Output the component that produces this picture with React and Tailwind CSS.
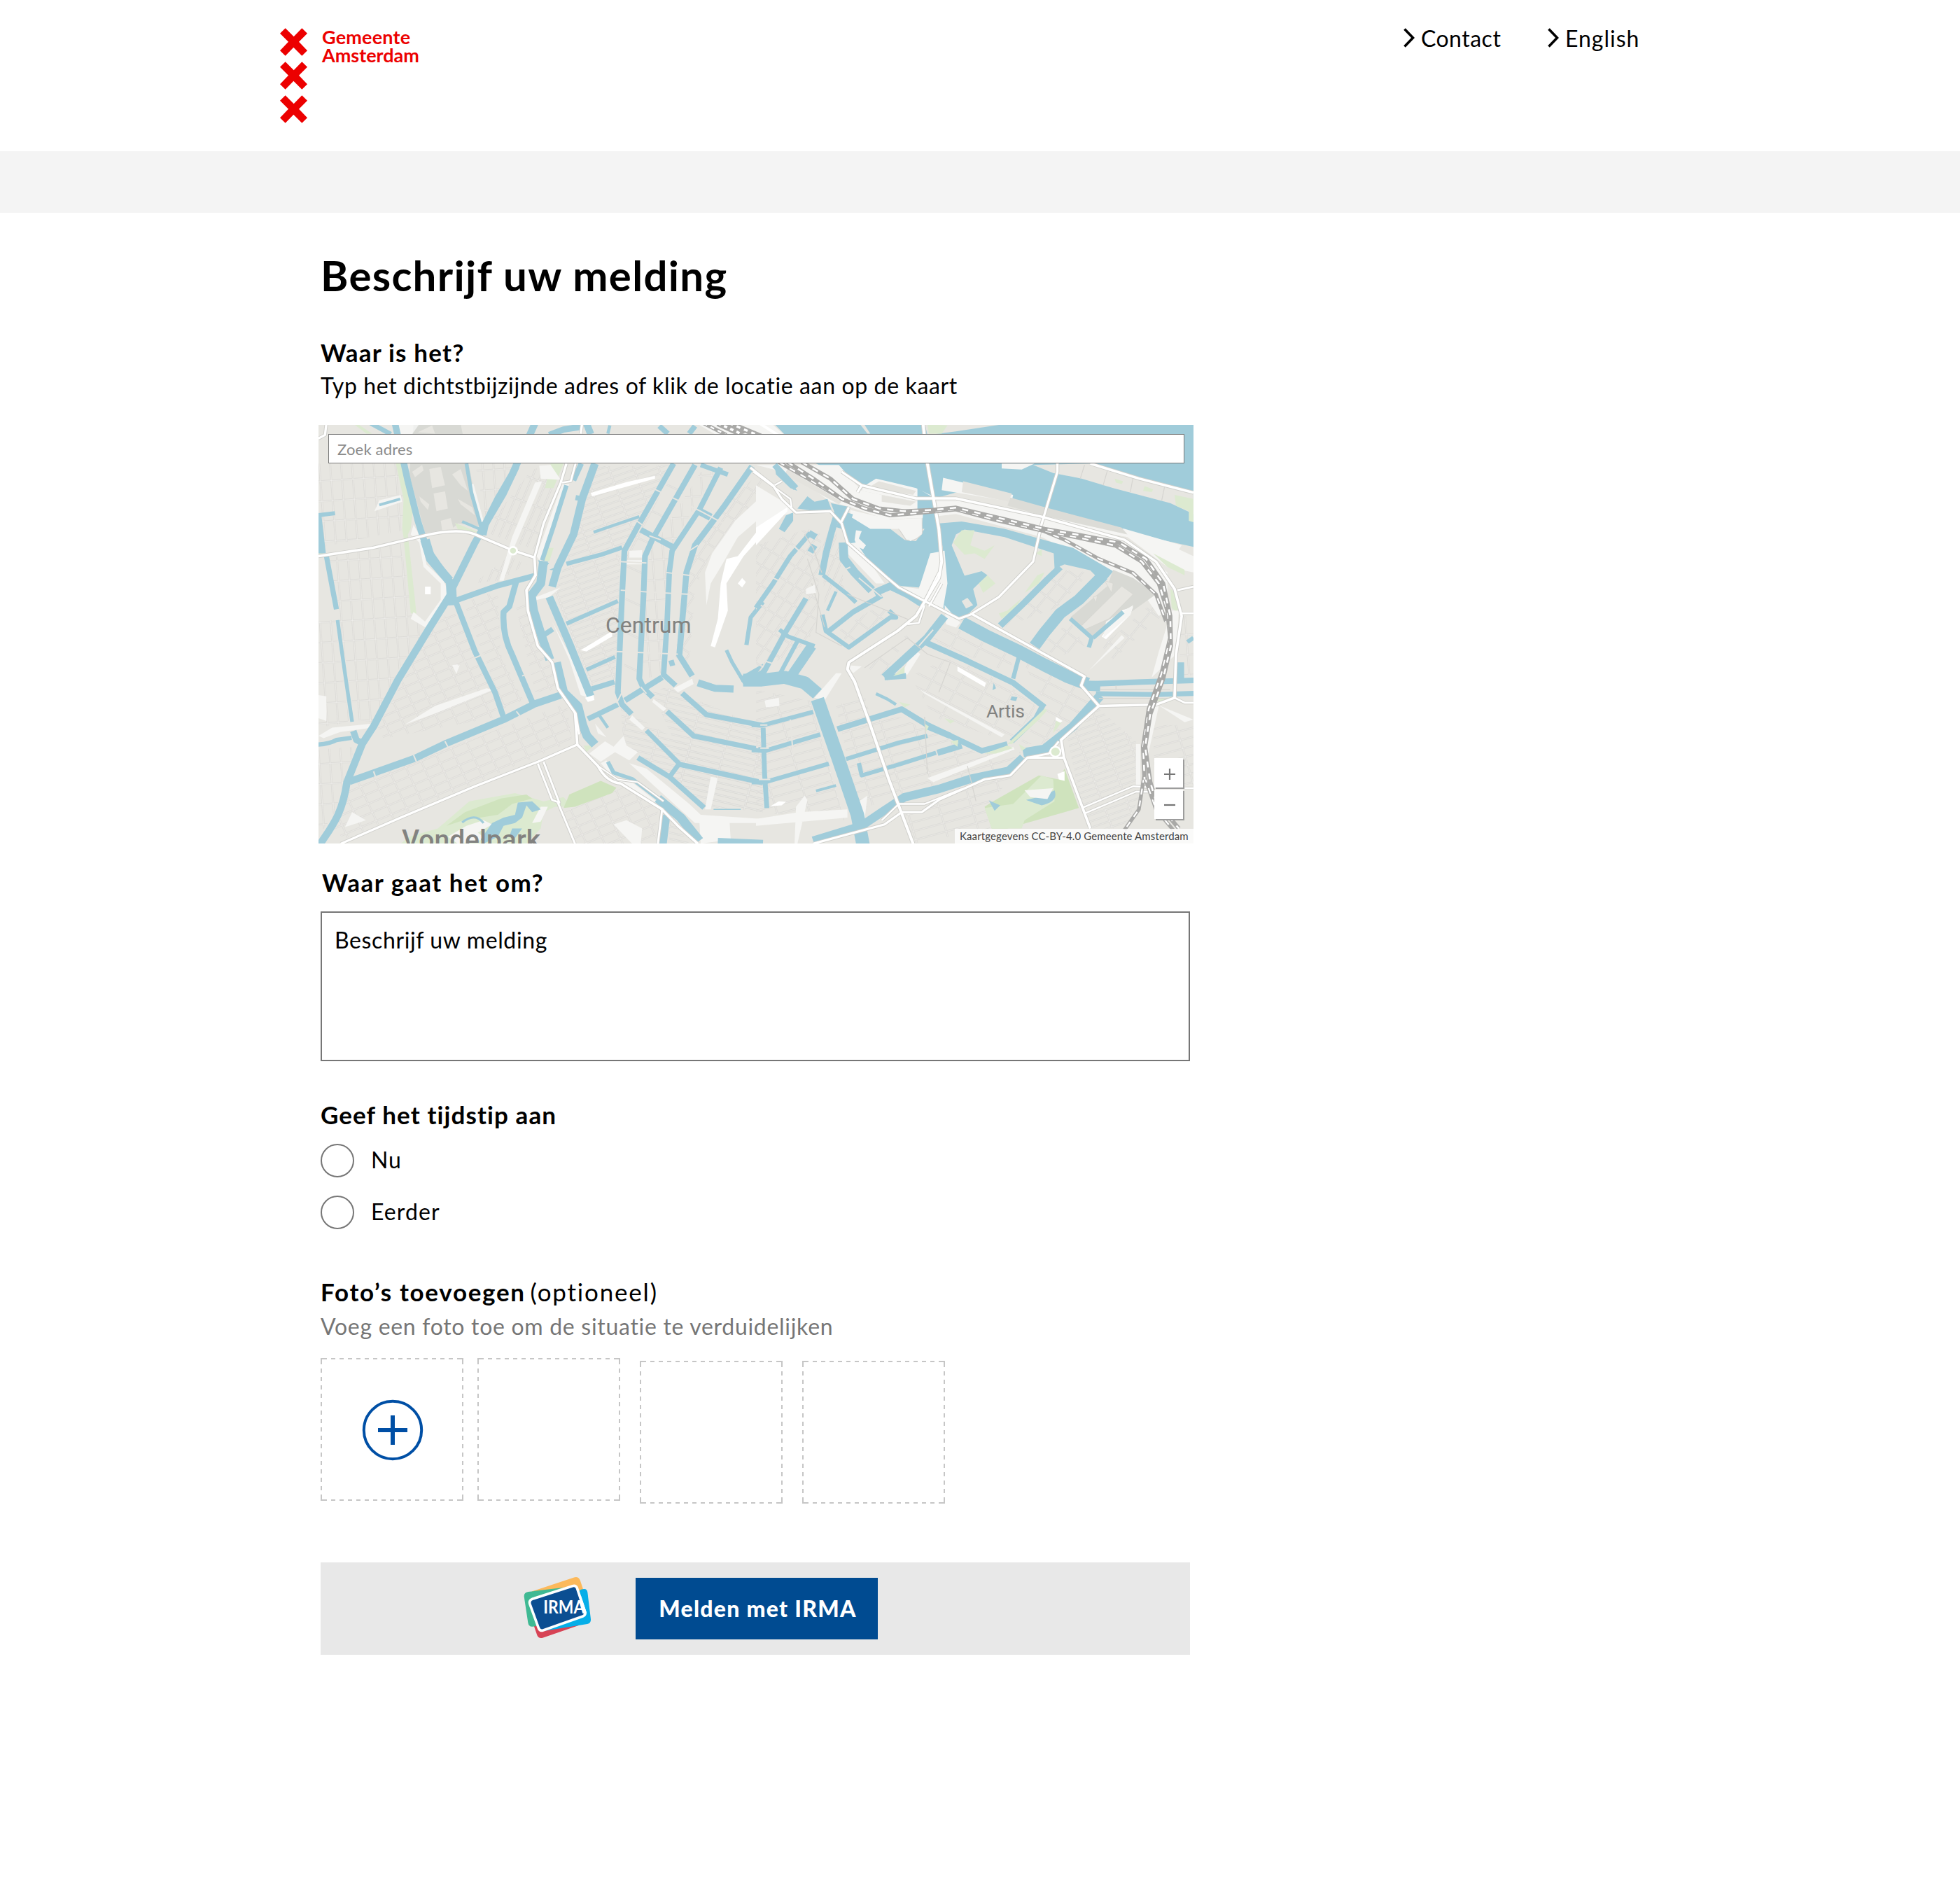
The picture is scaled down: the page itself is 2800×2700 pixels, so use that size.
const WATER = "#a0ccda";
const LAND = "#e7e6e1";
const STREET = "#d6d5d1";
const PALE = "#f5f5f3";
const PARK = "#dcead0";
const PARK_DARK = "#cfe3bd";

// [path, width] pairs of the canals in the western half of the map
const canalsWest = [
  ["M10 350 70 342", 14],
  ["M40 500 75 695", 17],
  ["M79 735 Q100 900 130 1108", 12],
  ["M134 1142 145 1175 172 1190", 22],
  ["M8 1192 Q50 1190 75 1175 L128 1167", 15],
  ["M15 1562 C60 1490 95 1450 112 1330 L165 1190 205 1125 290 955 400 765 475 640", 25],
  ["M475 630 560 450 590 395 640 290 690 200 770 12", 24],
  ["M590 395 660 270 705 170", 22],
  ["M280 12 325 225 360 370 390 470 430 530 478 600", 22],
  ["M385 440 405 510 470 590", 32],
  ["M475 585 480 680", 34],
  ["M490 660 560 850 630 1000 660 1092", 19],
  ["M495 662 640 608 770 572", 20],
  ["M705 590 680 685 660 705 Q655 790 690 862 L762 1040", 20],
  ["M120 1328 350 1242 460 1187 660 1100 770 1042 860 1010", 25],
  ["M800 518 790 600 757 645 765 700 792 790 822 880", 30],
  ["M845 890 870 1000 920 1050 937 1120 952 1160 980 1192", 30],
  ["M800 790 832 768", 18],
  ["M880 240 835 390 795 515", 15],
  ["M932 160 905 222", 18],
  ["M980 160 935 290 905 420 850 540 830 612", 26],
  ["M912 285 940 290", 18],
  ["M820 650 890 820 965 1015", 26],
  ["M530 160 548 270 582 395", 12],
  ["M515 373 580 402", 9],
  ["M195 12 265 52", 16],
  ["M820 55 870 35 930 25", 22],
  ["M950 12 965 52", 24],
  ["M1032 20 1025 50", 10],
  ["M1255 160 1130 390 1083 480 1075 640 1060 1000 1075 1045 1108 1080", 19],
  ["M1160 1140 1275 1262 1245 1305", 16],
  ["M1278 1265 1568 1332", 18],
  ["M1330 165 1180 440 1155 500 1150 640 1135 950 1150 985 1182 1018", 19],
  ["M1232 1070 1325 1160 1568 1212", 18],
  ["M1420 175 1345 330 1250 480 1240 560 1232 750 1220 935 1262 975", 18],
  ["M1285 1003 1370 1082 1568 1122", 18],
  ["M1350 165 1445 200", 16],
  ["M1530 170 1430 320 1330 460 1300 560 1275 865 1320 940", 20],
  ["M1340 965 1400 985 1465 988", 25],
  ["M1140 403 1250 465", 20],
  ["M1345 335 1385 357", 26],
  ["M975 412 1050 385 1135 355", 10],
  ["M880 528 1000 495 1075 468", 15],
  ["M880 748 1060 665", 14],
  ["M950 917 1050 870", 13],
  ["M968 988 1048 962", 18],
  ["M1085 1030 1215 945", 20],
  ["M955 1098 1060 1045", 18],
  ["M992 1080 1025 1130", 10],
  ["M1240 895 1258 890", 20],
  ["M1130 1240 1240 1310 1362 1424", 18],
  ["M1025 1255 1045 1295 1110 1318 1200 1390", 13],
  ["M1200 1390 1280 1460 1345 1545", 32],
  ["M1228 1450 1215 1562", 30],
  ["M1410 1545 1568 1552", 20],
  ["M1395 1430 1490 1430", 3],
  ["M1568 668 1525 725 1510 826", 14],
  ["M1440 845 1460 890 1500 960", 12],
  ["M1205 22 1235 50 M1330 22 1310 50", 18],
  ["M225 312 298 290", 9],
];

// canals in the eastern half
const canalsEast = [
  ["M215 1025 290 1250 355 1450 375 1562", 46],
  ["M-45 955 20 955 100 945 170 965 215 1005", 46],
  ["M120 945 195 830", 34],
  ["M205 830 112 795 82 770", 14],
  ["M190 415 120 500 60 600 0 690", 16],
  ["M185 415 210 430 M205 460 190 485", 22],
  ["M175 655 100 785 20 940", 18],
  ["M145 812 85 930", 14],
  ["M285 340 265 410 245 490 230 570", 22],
  ["M320 340 300 400", 40],
  ["M305 450 308 510 345 560 405 625", 30],
  ["M235 570 320 640 350 670", 14],
  ["M280 630 250 700", 10],
  ["M232 715 245 775 325 835 470 725 490 725 465 700", 15],
  ["M255 775 340 705 440 645", 18],
  ["M415 635 470 610 530 640 590 680", 26],
  ["M660 720 600 800 450 945", 28],
  ["M450 945 525 940", 20],
  ["M590 815 740 885 900 965 1010 1055", 20],
  ["M1005 1045 980 1095 895 1180", 18],
  ["M920 870 900 950", 14],
  ["M420 1005 460 1025 490 1045", 10],
  ["M285 1135 510 1062 600 1120 700 1170 790 1215 880 1190", 20],
  ["M600 1125 680 1160", 22],
  ["M315 1245 500 1185 600 1160", 15],
  ["M360 1260 370 1305 500 1265 630 1222", 14],
  ["M635 1222 720 1195", 22],
  ["M210 1362 280 1342", 9],
  ["M-15 1120 20 1122 200 1072", 15],
  ["M-15 1212 30 1215 225 1155", 15],
  ["M-15 1330 30 1330 255 1262", 15],
  ["M25 1130 30 1300 38 1425", 16],
  ["M720 745 800 790 920 850 1010 900 1090 942 1160 970", 46],
  ["M1150 970 1350 962 1568 955", 20],
  ["M1190 1005 1400 1008 1568 1003", 17],
  ["M1150 975 1205 978", 36],
  ["M1205 1012 1110 1125 1010 1208 935 1222", 32],
  ["M935 1240 885 1288 750 1318 640 1355 520 1385 440 1440 370 1490 200 1545", 30],
  ["M1065 540 1020 585 940 670 855 755", 22],
  ["M1215 570 1130 660 1065 710 1010 780 975 830", 40],
  ["M1100 730 1175 800 1165 835 M1180 800 1285 705", 14],
  ["M1485 890 1485 950", 26],
  ["M1531 800 1510 815", 14],
  ["M65 165 140 250", 20],
];

// main roads: [path, width]
const roadsWest = [
  ["M12 500 200 470 380 425 Q500 395 560 420 L690 478 768 505 772 570 740 625 745 700 780 830 830 890 850 985 910 1075 918 1192 990 1270 Q1020 1330 1070 1335 L1215 1430 1270 1490 1340 1556", 9],
  ["M918 1192 780 1255 560 1345 300 1460 90 1556", 8],
  ["M935 12 930 50 M880 160 860 230 800 380 768 505", 8],
  ["M912 160 895 225 865 230", 7],
  ["M780 1262 830 1395 855 1405 800 1255 M850 1405 910 1556", 7],
  ["M40 12 35 55 12 68", 8],
  ["M1215 1430 1200 1556", 7],
  ["M912 1075 925 1155", 7],
  ["M990 1270 1060 1320 1130 1330 1220 1400", 5],
];
const roadsEast = [
  ["M585 15 600 160 640 400 650 520 640 580 560 720 495 775 325 890 320 915 345 960 400 1120 465 1320 550 1556", 10],
  ["M-20 175 60 240 90 290 140 340 260 335 300 380 320 450 460 580 500 615 590 665 710 730 750 715 850 650 970 520 1000 380 1055 190 1055 160", 8],
  ["M590 665 640 560 M605 685 650 600 M590 680 570 745 530 750", 6],
  ["M755 712 1150 942 1138 975 1200 1050 1068 1175 1078 1240 1170 1500", 9],
  ["M370 240 560 288 700 288 1000 355 1290 440 1400 520 1465 620 1490 720 1470 860 1465 1020 1400 1045 1200 1050", 9],
  ["M1465 1020 1500 1038 1531 1038 M1475 625 1531 612 M1490 710 1531 710", 7],
  ["M300 190 370 240 355 265 M325 320 298 375", 8],
  ["M1170 160 1340 215 1531 267", 9],
  ["M1078 1240 950 1240 890 1305 800 1320 640 1395 580 1440 510 1440", 8],
  ["M500 1410 590 1410 720 1355 M500 1410 440 1470", 6],
  ["M510 1440 450 1485 200 1556", 8],
  ["M1060 1180 1025 1225 950 1240", 7],
  ["M1140 1425 1320 1345 1395 1350 M1150 1445 1330 1365 1395 1365 M1500 1352 1531 1352", 6],
  ["M-10 190 120 290 125 320 M65 240 90 225", 6],
];

// lighter plazas and wide streets
const plazas = [
  "M208 335 225 295 300 275 305 300Z",
  "M12 1010 40 1015 40 1105 12 1095Z",
  "M12 1160 60 1130 200 1115 200 1130 90 1145 30 1168Z",
  "M315 1118 420 1050 600 985 625 990 420 1078Z",
  "M480 900 508 896 495 932Z",
  "M105 1495 130 1440 178 1470Z",
  "M770 230 795 225 700 460 660 590 645 590 690 430Z",
  "M865 235 890 235 790 520 775 500Z",
  "M345 385 375 440 390 530 450 590 470 640 400 770 335 730 345 705 385 740 440 660 440 600 380 540 365 450 335 420Z",
  "M960 1225 1015 1180 1045 1200 1080 1160 1090 1195 1130 1220 1100 1250 1050 1220 1000 1255Z",
  "M1100 1260 1160 1280 1310 1410 1350 1450 1568 1465 1568 1480 1330 1480Z",
  "M1000 1260 1020 1250 1050 1310 1110 1330 1200 1405 1180 1405 1060 1335Z",
  "M1045 1485 1090 1470 1145 1500 1140 1556 1110 1556Z",
  "M1568 275 1470 370 1390 490 1365 560 1370 680 1385 600 1420 540 1480 430 1568 350Z",
  "M1385 1310 1410 1315 1385 1430 1365 1430Z",
  "M1345 1470 1450 1460 1455 1540 1350 1556Z",
  "M1255 985 1320 950 1325 970 1270 1000Z",
  "M830 740 890 860 960 1020 930 1010 890 880Z",
  "M785 168 825 165 860 220 790 215Z",
  "M750 660 860 615 820 650 760 665Z",
  "M1100 480 1145 478 1145 505 1100 505Z",
  "M1110 1085 1155 1130 1145 1140 1100 1100Z M1185 1025 1230 1060 1220 1070 1180 1035Z",
  "M1075 515 1165 515 1165 530 1075 530Z",
  "M545 235 555 235 590 370 580 380Z",
  "M980 1115 1020 1165 990 1150Z",
];
const plazasEast = [
  "M0 240 110 310 130 340 90 350 0 450Z",
  "M330 330 470 365 580 360 580 420 540 445 500 400 400 400 330 355Z",
  "M610 490 660 480 670 600 655 690 600 670 500 610 570 620Z",
  "M660 680 715 745 700 762 665 750Z",
  "M555 840 575 860 530 935 510 930Z",
  "M205 1020 280 930 300 930 240 1030Z M30 1030 80 1020 82 1050 35 1055Z",
  "M575 990 870 1155 860 1165 590 1005Z M600 1315 900 1200 905 1210 620 1330Z",
  "M1330 1190 1345 1190 1345 1345 1330 1345Z M1395 1050 1410 1050 1370 1240 1365 1180Z",
  "M1410 1048 1531 1100 1500 1110Z M1455 700 1480 700 1470 860 1385 945 1410 850Z",
  "M1225 740 1320 680 1310 715 1215 800Z M1165 920 1280 790 1290 800Z",
  "M0 1465 150 1440 320 1430 320 1460 0 1490Z M360 1400 390 1380 380 1470Z M140 1420 170 1380 180 1395 145 1556 135 1556Z",
  "M320 900 370 905 340 930Z M315 455 350 450 450 600 420 600 320 490Z",
];

// street blocks: polygon and the street grid that fills it
const districts = [
  ["M12 160 290 160 330 400 12 470Z", "g5"],
  ["M40 510 300 450 340 700 380 780 300 900 200 1110 140 1100 80 700Z", "g5"],
  ["M12 740 70 735 120 1110 12 1130Z", "g5"],
  ["M590 410 760 180 850 170 780 480Z M555 600 680 500 740 530 640 590Z", "g20"],
  ["M400 780 480 690 620 970 640 1090 240 1170 220 1130Z", "g65"],
  ["M520 670 640 625 650 860 730 1030 660 1060Z M700 670 745 650 850 990 770 1000Z", "g65"],
  ["M130 1340 880 1040 900 1180 100 1540 60 1490Z", "g65"],
  ["M12 1210 140 1200 70 1440 12 1530Z", "g5"],
  ["M985 170 1240 165 1080 460 880 520Z", "g70"],
  ["M870 540 1070 490 1050 980 970 980 840 640Z", "g70"],
  ["M1270 170 1320 170 1170 480 1120 990 1080 1020 1090 480Z", "g25"],
  ["M1350 190 1400 190 1240 480 1210 930 1140 960 1170 490Z", "g5"],
  ["M1070 1060 1568 1345 1568 1440 1370 1420 1080 1190Z", "g15"],
  ["M1180 1000 1230 980 1568 1130 1568 1320 1290 1255Z", "g15"],
  ["M1430 320 1568 180 1568 300 1390 480 1330 620 1310 900 1260 870 1310 480Z", "g30"],
  ["M870 1440 1100 1340 1200 1430 1190 1556 920 1556Z", "g65"],
  ["M1240 1450 1310 1556 1240 1556Z M1230 1290 1380 1400 1568 1440 1568 1340 1280 1280Z", "g15"],
  ["M560 160 700 160 600 370Z", "g5"],
];
const districtsEast = [
  ["M0 460 180 400 230 420 210 740 180 820 0 930Z", "g30"],
  ["M230 430 280 400 310 620 240 680Z", "g20"],
  ["M0 990 190 1030 310 1470 0 1440Z", "g75"],
  ["M280 1050 380 1010 480 1390 360 1430Z", "g75"],
  ["M400 1110 500 1090 780 1225 880 1210 930 1220 860 1280 480 1380Z", "g75"],
  ["M540 940 680 870 880 970 990 1060 880 1180 620 1090Z", "g28"],
  ["M610 790 680 755 900 870 890 930 640 820Z M930 880 1130 980 1190 1050 1030 1190 920 1190 1020 1060Z", "g28"],
  ["M280 780 430 680 470 710 330 820Z M390 910 560 760 440 940Z", "g35"],
  ["M940 680 1070 550 1170 560 1050 690 870 760Z M990 830 1100 740 1150 830 1060 870Z M1210 830 1400 660 1420 720 1250 880Z", "g35"],
  ["M1090 1170 1200 1060 1330 1180 1340 1340 1140 1420Z M1160 1450 1350 1370 1290 1500 1180 1500Z", "g70"],
  ["M770 1330 900 1310 800 1420 820 1500 560 1556 520 1450 640 1400Z", "g75"],
  ["M1390 1120 1531 1120 1531 1350 1395 1340Z", "g75"],
  ["M1490 720 1531 720 1531 940 1480 940Z", "g5"],
];

const grids = [["g5", -4, 38, 74], ["g15", 14, 120, 22], ["g20", 22, 26, 90], ["g25", 26, 400, 110], ["g28", 28, 90, 46], ["g30", 33, 34, 62], ["g35", 38, 46, 60], ["g65", -24, 58, 34], ["g70", -20, 82, 22], ["g75", -16, 110, 32]];

const rails = [
  "M110 155 200 215 300 290 380 325 470 350 560 342 700 328 850 370 1000 405 1130 432 1260 462 1350 520 1410 600 1440 700 1450 800 1420 930 1375 1060 1355 1200 1360 1320",
  "M160 155 260 215 340 290 430 325 520 335 620 330 700 322 860 362 1010 400 1130 422 1270 450 1365 510 1425 600 1450 720 1452 830 1425 950 1380 1080 1362 1200 1380 1330 1400 1400 1480 1500",
];
const railSpurs = [
  "M80 155 180 215 300 290 370 320",
  "M1000 405 1080 440 1200 510 1320 562 1400 640 1435 740",
  "M1358 1310 1340 1430 1290 1505",
  "M1360 1310 1400 1430 1460 1505",
];

function Lines({ items, color, extra = 0 }) {
  return (
    <g fill="none" stroke={color} strokeLinejoin="round">
      {items.map(([d, w]) => <path key={d} d={d} strokeWidth={w + extra} />)}
    </g>
  );
}

function Fills({ items, color }) {
  return <g fill={color}>{items.map((d) => <path key={d} d={d} />)}</g>;
}

function Rail({ d, w, dash = 22 }) {
  return (
    <g fill="none" strokeLinejoin="round">
      <path d={d} stroke="#a9a9a7" strokeWidth={w} />
      <path d={d} stroke="#fff" strokeWidth={w * 0.42} strokeDasharray={`${dash} ${dash}`} />
    </g>
  );
}

function CityMap() {
  const west = "translate(-5 -7) scale(.40816 .38903)";
  const east = "translate(625 -7) scale(.40816 .38903)";
  return (
    <svg viewBox="0 0 1250 598" className="block h-[598px] w-[1250px]" aria-hidden="true">
      <defs>
        {grids.map(([id, a, w, h]) => (
          <pattern key={id} id={id} width={w} height={h} patternUnits="userSpaceOnUse" patternTransform={`rotate(${a})`}>
            <path d={`M0 3H${w}M3 0V${h}`} stroke={STREET} strokeWidth="6" fill="none" />
            <path d={`M0 3H${w}M3 0V${h}`} stroke="#f0efec" strokeWidth="2.4" fill="none" />
          </pattern>
        ))}
      </defs>
      <rect width="1250" height="598" fill={LAND} />

      <g transform={west}>
        {districts.map(([d, g]) => <path key={d} d={d} fill={`url(#${g})`} />)}
        <path d="M345 15H510L545 200 580 390 500 380 480 400 385 415 330 200Z" fill="#d8d9d4" />
        <path d="M400 180 440 172 455 240 410 250Z M415 270 455 262 465 325 425 335Z M360 45 420 50 410 20Z M365 280 400 310 395 330 370 300Z M340 190 375 165 380 185 350 210Z M480 200 510 240 535 260 510 180Z M440 370 475 360 485 400 445 405Z M500 290 550 320 560 350 510 310Z" fill={LAND} />
        <path d="M280 15H365L340 52H290Z" fill="#fff" opacity=".6" />
        <Fills items={["M283 160H310L325 270 345 310 335 400 325 420 355 710H335L310 430 305 400 310 290Z", "M150 15 200 50H180L140 18Z", "M825 160H870L835 250H805Z", "M490 378 580 415 500 402Z", "M815 470 835 470 820 520 800 515Z", "M12 485H28V500H12Z", "M940 1195 975 1195 950 1220Z", "M430 1500 540 1400 700 1370 800 1400 870 1385 900 1420 840 1420 800 1440 790 1500 740 1556H300L330 1530Z", "M1370 1470 1400 1470 1390 1510 1360 1500Z M1250 1440 1310 1470 1310 1500Z"]} color={PARK} />
        <Fills items={["M525 1440 650 1390 740 1375 760 1390 690 1410 640 1450 520 1470 460 1490Z", "M870 1425 890 1375 1000 1325 1055 1350 1040 1370 910 1420Z"]} color={PARK_DARK} />
        <path d="M465 1530 530 1490 590 1470 620 1485 570 1515 600 1540 500 1556 M760 1480 790 1420 815 1420 790 1475Z" fill={PALE} />
        <path d="M580 1540 620 1480 660 1460 700 1450 710 1405 760 1400 790 1430 760 1440 740 1415 725 1460 700 1480 660 1490 640 1530 590 1556Z M690 1500 725 1500 700 1535 680 1530Z" fill={WATER} />
        <path d="M515 1478Q560 1440 590 1480" fill="none" stroke={WATER} strokeWidth="8" />
        <Fills items={plazas} color={PALE} />
        <Lines items={canalsWest} color={WATER} extra={1} />
        <path d="M12 345H22L38 490H12Z M1485 945 1568 895V972L1500 972Z M780 515 820 525 800 550Z M820 550 862 530 860 555Z M575 375 610 375 600 425 575 420Z" fill={WATER} />
        <g fill="none" stroke={LAND} strokeWidth="5">
          <path d="M1075 1000 1055 1040M1125 370 1145 385M1310 480 1340 460M1070 625 1170 632 1310 640M1055 850 1270 860M1065 520 1160 525M1230 560 1320 572M1190 255 1280 300 1350 335 1430 380M205 1290 215 1320M345 1230 355 1255M455 1180 465 1200M705 1070 720 1090M1140 980 1160 1005M590 860 500 900M725 940 790 915M1170 425 1210 440" />
        </g>
        <Fills items={["M965 268 1090 228 1190 205 1190 215 1090 245 970 280Z", "M930 845 1040 775 1040 795 950 850Z", "M1568 420 1500 500 1440 600 1445 700 1400 835 1385 830 1410 730 1420 600 1440 510 1480 500 1568 380Z", "M945 1020 975 1010 978 1028 955 1035Z", "M1480 600 1495 580 1508 595 1495 615Z", "M385 612 405 612 405 640 385 640Z"]} color="#fff" />
        <Lines items={roadsWest} color="#d0d0cc" extra={5} />
        <Lines items={roadsWest} color="#fff" />
        <circle cx="693" cy="480" r="14" fill={PARK} stroke="#fff" strokeWidth="7" />
      </g>

      <g transform={east}>
        {districtsEast.map(([d, g]) => <path key={d} d={d} fill={`url(#${g})`} />)}
        <path d="M60 10H1540V468L1420 440 1280 400 1010 330 900 300 720 260 620 290 560 262 370 240 190 150Z" fill={WATER} />
        <path d="M590 10H900L700 42 600 55Z M360 10H375L400 50 390 50Z" fill={LAND} />
        <path d="M600 15 670 20 650 50 605 50Z" fill={PARK} />
        <path d="M860 160H975L930 182 860 178Z M655 212 900 275 895 300 650 258Z M375 245 420 215 560 250 620 280 1010 345 1290 400 1490 460 1480 475 1531 500V560L1440 540 1300 430 1000 370 700 300 560 300 370 260Z" fill={PALE} />
        <path d="M0 165H290L370 260 560 300 700 300 1000 360 1290 440 1440 560 1440 700 1410 720 1330 600 1000 430 700 345 580 360 470 370 330 320 260 300 130 200Z" fill={PALE} />
        <path d="M725 225 895 270 885 300 720 265Z M430 225 560 260 550 275 390 250Z M440 275 560 300 540 315 440 300Z M110 180 300 300 290 310 100 200Z" fill="#e4e3de" />
        <path d="M890 285 1010 320 1280 395 1300 420 1000 350 880 315Z" fill="#dcdcd7" />
        <path d="M970 165 1180 160 1340 215 1531 267V345L1450 305 1250 250 1140 215 1040 195Z" fill={LAND} />
        <path d="M1150 165 1135 215M1230 185 1215 240M1320 210 1310 265M1430 245 1420 295" stroke={STREET} strokeWidth="3" />
        <path d="M1465 275 1531 290V375L1515 370V335L1470 315Z M1255 215 1285 225 1280 235 1260 230Z M1360 242 1390 255 1385 265 1355 260Z" fill={PARK} />
        <path d="M1390 490 1500 550 1500 570 1440 540Z M1450 620 1475 640 1478 710 1455 690Z" fill={PARK} />

        <path d="M145 325 180 280 205 300 250 290 265 330 210 335Z M80 400 105 350 130 340 130 370 100 412Z M262 305 330 320 320 350 290 380Z M65 165 100 200 145 260 120 250 70 200Z" fill={WATER} />
        <path d="M325 350 400 395 470 400 520 440 560 445 590 400 590 350 635 345 655 490 612 490 600 550 570 615 510 610 470 600 430 545 330 455 305 400Z" fill={WATER} />
        <path d="M565 250 620 285 640 400 580 400 585 340 565 330Z" fill={WATER} />
        <path d="M345 440 350 405 370 408 360 435 385 460 375 475 355 465Z" fill={PALE} />
        <path d="M470 365 580 362 582 415Q560 450 525 440L500 400Z" fill={PALE} stroke={STREET} strokeWidth="3" />
        <path d="M640 380 720 373 870 400 990 435 1110 470 1250 555 1215 600 1170 552 1080 530 1045 545 1042 490 870 430 730 402 700 420 685 460 730 572 790 555 810 570 760 620 775 680 720 735 655 690 665 600 655 480Z" fill={WATER} />
        <path d="M720 665 740 653 760 680 735 692Z" fill={LAND} />
        <path d="M720 405 765 405 750 460 800 480 835 460 800 510 765 490 730 495 690 450Z M780 600 810 570 838 600 795 635Z M940 635 985 570 1010 560 990 600Z M850 710 880 700 930 655 900 700 860 730Z M980 490 1000 475 1000 500Z" fill={PARK} />
        <path d="M1250 550 1320 580 1400 640 1320 700 1180 800 1100 725 1230 610Z" fill="#d8d9d4" />
        <path d="M1280 610 1320 640 1235 730 1150 770 1140 755Z M1180 650 1195 645 1190 670Z M1220 590 1250 600 1245 635Z" fill={LAND} stroke={STREET} strokeWidth="2" />
        <path d="M1280 700 1320 685 1310 715 1225 805 1210 795Z" fill="#fff" />
        <Fills items={plazasEast} color={PALE} />
        <Lines items={canalsEast} color={WATER} extra={1} />
        <path d="M480 940 520 905 520 930Z M500 1035 540 1045 520 1055Z M1010 1060 1020 1065 990 1100 895 1190 880 1190Z M660 1095 695 1105 680 1115Z M590 1115 605 1125 595 1145Z M680 1180 708 1175 705 1200Z M920 1190 945 1205 930 1215Z M800 1225 880 1195 900 1205 840 1225Z M1040 1150 1070 1110 1050 1105Z M1390 1030 1465 1015 1450 1035Z" fill={PARK} />
        <path d="M800 1420 830 1400 990 1305 1060 1320 1080 1280 1130 1425 880 1500H825Z" fill={PARK_DARK} />
        <path d="M800 1425 900 1410 1000 1305 1040 1320 1045 1400 940 1470 930 1500H825Z" fill={PARK} />
        <path d="M945 1395Q1000 1385 1045 1360Q1060 1400 1000 1415Q970 1405 945 1395Z M815 1397 855 1415 835 1435Z M895 1015 915 1018 910 1032 890 1028Z M832 965 840 985 828 992Z" fill={WATER} />
        <path d="M940 1360 1040 1352 1020 1392 960 1385Z" fill={PALE} />
        <path d="M1055 1300 1080 1290 1080 1325 1060 1320Z M705 905 805 965 800 980 705 922Z M1050 1090 1073 1105 1065 1112 1048 1102Z M0 395 110 320 110 335 0 460Z M50 1418 80 1400 105 1402 90 1415Z" fill="#fff" />
        <g fill="none" stroke={LAND} strokeWidth="5">
          <path d="M15 1120H40M15 1205H45M10 1320H50M130 460 170 500M60 580 100 600M30 885 60 895M300 555 330 540M360 580 440 650M570 830 620 770M120 1100 130 1230" />
        </g>
        <path d="M1200 1022H1465M1205 990H1450M1260 975V990" stroke={STREET} strokeWidth="3" fill="none" />
        <path d="M180 510 220 640 210 780 300 830M230 560 200 470 170 420M195 600 240 760M590 1090 600 1300M740 1270 770 1400M380 910 530 800 600 860 680 890 640 1000M320 640 550 740" stroke={STREET} strokeWidth="3" fill="none" />
        <Lines items={roadsEast} color="#d0d0cc" extra={5} />
        <Lines items={roadsEast} color="#fff" />
        <circle cx="1048" cy="1218" r="18" fill={PARK} stroke="#fff" strokeWidth="6" />
        <path d="M175 620 205 605 210 635 175 640Z" fill={PALE} />
        {railSpurs.map((d) => <Rail key={d} d={d} w={13} />)}
        {rails.map((d) => <Rail key={d} d={d} w={15} />)}
      </g>

      <g transform={west}>
        <path d="M1340 15H1600L1640 52H1400Z" fill={PALE} />
        <Rail d="M1360 12 1440 55" w={14} dash={14} />
        <Rail d="M1410 12 1500 55" w={22} dash={12} />
        <Rail d="M1450 12 1560 60" w={20} dash={14} />
        <path d="M1560 15 1620 55" stroke="#fff" strokeWidth="10" />
      </g>
    </svg>
  );
}

function Crosses() {
  const cross = "M23 0 59 36 94 0 117 23 81 59 117 96 94 119 58 83 23 119 0 96 36 59 0 23Z";
  return (
    <svg viewBox="0 0 117 407" className="h-[136px] w-[39px]" fill="#ec0000" aria-hidden="true">
      {[0, 144, 288].map((y) => <path key={y} d={cross} transform={`translate(0 ${y})`} />)}
    </svg>
  );
}

function NavLink({ children, className }) {
  return (
    <a className="flex items-start text-[32px] leading-[40px]">
      <svg viewBox="0 0 18 28" className="mt-[5px] ml-px h-7 w-[18px]" fill="none" stroke="#000" strokeWidth="3.6" aria-hidden="true">
        <path d="M1.5 1.5 13.5 14 1.5 26.5" />
      </svg>
      <span className={className}>{children}</span>
    </a>
  );
}

function IrmaLogo() {
  return (
    <svg viewBox="0 0 360 330" className="-mt-[6px] ml-[282px] h-[110px] w-[120px]" aria-hidden="true">
      <path d="M60 100 238 41Q258 34 266 52L292 130 90 190Z" fill="#fcb95b" />
      <path d="M62 230 82 288Q88 304 106 299L260 246 200 190Z" fill="#d74355" />
      <path d="M44 102 245 78 270 220 65 251Q46 254 43 235L26 122Q25 105 44 102Z" fill="#3fb993" />
      <path d="M270 92 282 90Q296 89 298 104L312 220Q313 237 297 240L110 270 200 150Z" fill="#06aee8" />
      <path d="M61 133 234 77Q248 73 253 86L287 188Q291 202 278 207L108 267Q93 272 88 257L51 155Q46 139 61 133Z" fill="#0b4e92" stroke="#fff" strokeWidth="11" />
      <text x="109" y="194" fill="#fff" fontFamily="Lato" fontWeight="700" fontSize="78" textLength="177" lengthAdjust="spacingAndGlyphs">IRMA</text>
      <path d="M265 120 290 195" stroke="#fff" strokeWidth="10" />
    </svg>
  );
}

function PhotoSlot({ className, children }) {
  return (
    <div className={className}>
      <svg viewBox="0 0 204 204" className="h-[204px] w-[204px]" fill="none" aria-hidden="true">
        <g stroke="#c6c6c6" strokeWidth="2">
          <path d="M0 1H204M0 203H204M1 0V204M203 0V204" strokeDasharray="6 6" strokeDashoffset="-3" />
          <path d="M1 5V1H5M199 1H203V5M1 199V203H5M199 203H203V199" />
        </g>
        {children}
      </svg>
    </div>
  );
}

function Radio({ label, className }) {
  return (
    <label className="flex h-12 gap-6">
      <span className="h-12 w-12 rounded-full border-2 border-[#767676]" />
      <span className={className}>{label}</span>
    </label>
  );
}

export default function App() {
  return (
    <div className="min-h-[2700px] w-[2800px] bg-white font-['Lato',sans-serif] text-black">
      <header className="flex h-[216px] items-start pl-[400px]">
        <div className="flex gap-[21px] pt-10">
          <Crosses />
          <div className="text-[27px] leading-[26px] font-bold text-[#ec0000]">
            <div className="tracking-[0.2px]">Gemeente</div>
            <div>Amsterdam</div>
          </div>
        </div>
        <nav className="ml-[1405px] flex gap-[65px] pt-[35px]">
          <NavLink className="ml-[7px] w-[115px] tracking-[0.5px]">Contact</NavLink>
          <NavLink className="ml-[7px] tracking-[1px]">English</NavLink>
        </nav>
      </header>
      <div className="h-[88px] bg-[#f4f4f4]" />

      <main className="ml-[458px] flex w-[1247px] flex-col">
        <h1 className="mt-[53px] text-[60px] leading-[72px] font-bold tracking-[1.3px]">Beschrijf uw melding</h1>

        <h2 className="mt-[52px] text-[35px] leading-[44px] font-bold tracking-[1.2px]">Waar is het?</h2>
        <p className="mt-[6px] text-[32px] leading-[40px] tracking-[0.63px] whitespace-nowrap">Typ het dichtstbijzijnde adres of klik de locatie aan op de kaart</p>

        <section className="relative mt-9 -ml-[3px] h-[598px] w-[1250px] overflow-hidden font-['Roboto',sans-serif] text-[#828280]">
          <CityMap />
          <span className="absolute top-[268px] left-[410px] text-[32px] leading-[36px]">Centrum</span>
          <span className="absolute top-[391px] left-[954px] text-[26.5px] leading-[36px] tracking-[-0.2px]">Artis</span>
          <span className="absolute top-[570px] left-[119px] text-[39px] leading-[46px] font-medium">Vondelpark</span>
          <div className="absolute top-[13px] left-[14px] h-[42px] w-[1223px] border border-[#767676] bg-white pl-[12px] font-['Lato'] text-[22px] leading-[41px] tracking-[0.2px] text-[#8a8a8a]">Zoek adres</div>
          <div className="absolute top-[476px] left-[1194px] flex flex-col gap-[3px] text-[#767676]">
            {["M22 15V31M14 23H30", "M14 22H30"].map((d) => (
              <button key={d} className="h-[42px] w-[41px] bg-white shadow-[2px_2px_0_#9c9c9c]">
                <svg viewBox="0 0 42 42" className="h-[42px] w-[42px]" stroke="currentColor" strokeWidth="2.2" aria-hidden="true"><path d={d} /></svg>
              </button>
            ))}
          </div>
          <div className="absolute right-0 bottom-0 h-[21px] w-[341px] bg-white/80 pl-[7px] font-['Lato'] text-[15px] leading-[21px] tracking-[0.12px] whitespace-nowrap text-[#444]">Kaartgegevens CC-BY-4.0 Gemeente Amsterdam</div>
        </section>

        <h2 className="mt-[33px] ml-[2px] text-[35px] leading-[44px] font-bold tracking-[1.56px]">Waar gaat het om?</h2>
        <div className="mt-5 h-[214px] w-[1242px] border-2 border-[#767676] pt-[19px] pl-[18px] text-[32px] leading-[40px] tracking-[0.62px]">Beschrijf uw melding</div>

        <h2 className="mt-[54px] text-[35px] leading-[44px] font-bold tracking-[1.1px]">Geef het tijdstip aan</h2>
        <div className="mt-5 flex flex-col gap-[26px]">
          <Radio label="Nu" className="-mt-px text-[32px] leading-[48px] tracking-[0.8px]" />
          <Radio label="Eerder" className="-mt-px text-[32px] leading-[48px] tracking-[1.1px]" />
        </div>

        <h2 className="mt-[67px] text-[35px] leading-[44px] font-bold tracking-[1.7px] whitespace-pre">Foto’s toevoegen<span className="-ml-1 font-normal tracking-[1.8px]"> (optioneel)</span></h2>
        <p className="mt-[8px] text-[32px] leading-[40px] tracking-[0.7px] text-[#767676]">Voeg een foto toe om de situatie te verduidelijken</p>
        <div className="mt-[25px] flex h-[208px]">
          <PhotoSlot>
            <circle cx="103" cy="103" r="41.2" stroke="#004fa5" strokeWidth="4" />
            <path d="M82 103H124M103 82V124" stroke="#004fa5" strokeWidth="6" />
          </PhotoSlot>
          <PhotoSlot className="ml-5" />
          <PhotoSlot className="mt-1 ml-7" />
          <PhotoSlot className="mt-1 ml-7" />
        </div>

        <div className="mt-[84px] flex h-[132px] w-[1242px] items-center bg-[#e8e8e8]">
          <IrmaLogo />
          <button className="ml-[48px] h-[88px] w-[346px] bg-[#004b91] pl-[3px] text-center text-[32px] leading-[88px] font-black tracking-[1.27px] whitespace-nowrap text-white">Melden met IRMA</button>
        </div>
      </main>
    </div>
  );
}
